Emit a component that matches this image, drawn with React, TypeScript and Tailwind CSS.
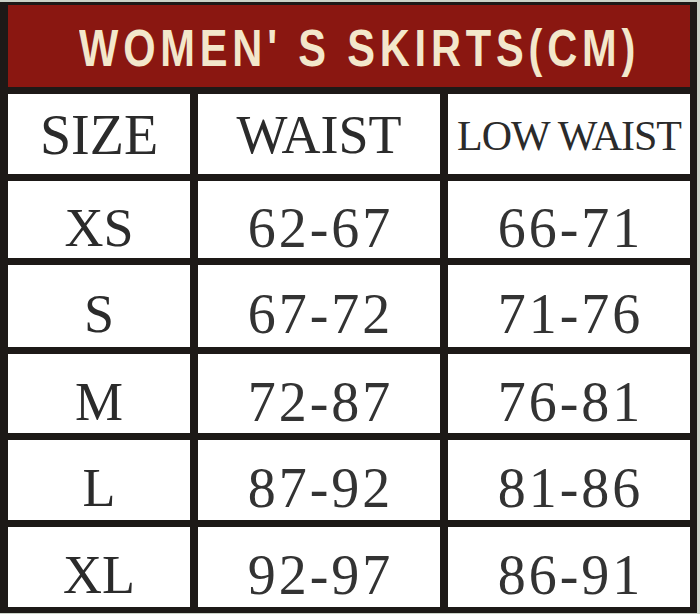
const rows = [
  { size: 'XS', waist: '62-67', low: '66-71' },
  { size: 'S', waist: '67-72', low: '71-76' },
  { size: 'M', waist: '72-87', low: '76-81' },
  { size: 'L', waist: '87-92', low: '81-86' },
  { size: 'XL', waist: '92-97', low: '86-91' },
];

// row heights tuned to the chart's ruled lines
const rowHeights = ['h-[77px]', 'h-[82px]', 'h-[79px]', 'h-[80px]', 'h-[80px]'];

const serif = "font-['Liberation_Serif','Times_New_Roman',serif]";

export default function App() {
  return (
    <div className="w-[700px] h-[614px] bg-[#cbd2c8] pt-[2px] overflow-hidden">
      <div className="w-[697px] bg-[#1d1917] pt-[3px] pl-[8px] pr-[7px] pb-[6px]">
        <div className="grid grid-cols-[182px_242px_242px] gap-x-[8px] gap-y-[7px]">
          <div className="col-span-3 h-[82px] bg-[#8a1711] flex items-center justify-center pl-[22px] pt-[4px] overflow-hidden">
            <span className="block whitespace-nowrap scale-x-[0.8] font-['Liberation_Sans','Arial',sans-serif] font-bold text-[52px] leading-none tracking-[6px] text-[#f3e7cb]">
              WOMEN' S SKIRTS(CM)
            </span>
          </div>

          <div className={`h-[80px] bg-white flex items-center justify-center pt-[2px] ${serif} text-[56px] text-[#2b2b2b]`}>
            SIZE
          </div>
          <div className={`h-[80px] bg-white flex items-center justify-center pt-[2px] ${serif} text-[54px] text-[#2b2b2b]`}>
            WAIST
          </div>
          <div className={`h-[80px] bg-white flex items-center justify-center pt-[4px] ${serif} text-[42px] tracking-[-1px] text-[#2b2b2b]`}>
            LOW WAIST
          </div>

          {rows.map((r, i) => (
            <div key={r.size} className="contents">
              <div className={`${rowHeights[i]} bg-white flex items-center justify-center pt-[16px] ${serif} text-[54px] leading-none text-[#2b2b2b]`}>
                {r.size}
              </div>
              <div className={`${rowHeights[i]} bg-white flex items-center justify-center pt-[16px] pl-[3px] ${serif} text-[56px] leading-none tracking-[3px] text-[#333]`}>
                {r.waist}
              </div>
              <div className={`${rowHeights[i]} bg-white flex items-center justify-center pt-[16px] pl-[3px] ${serif} text-[56px] leading-none tracking-[3px] text-[#333]`}>
                {r.low}
              </div>
            </div>
          ))}
        </div>
      </div>
    </div>
  );
}
